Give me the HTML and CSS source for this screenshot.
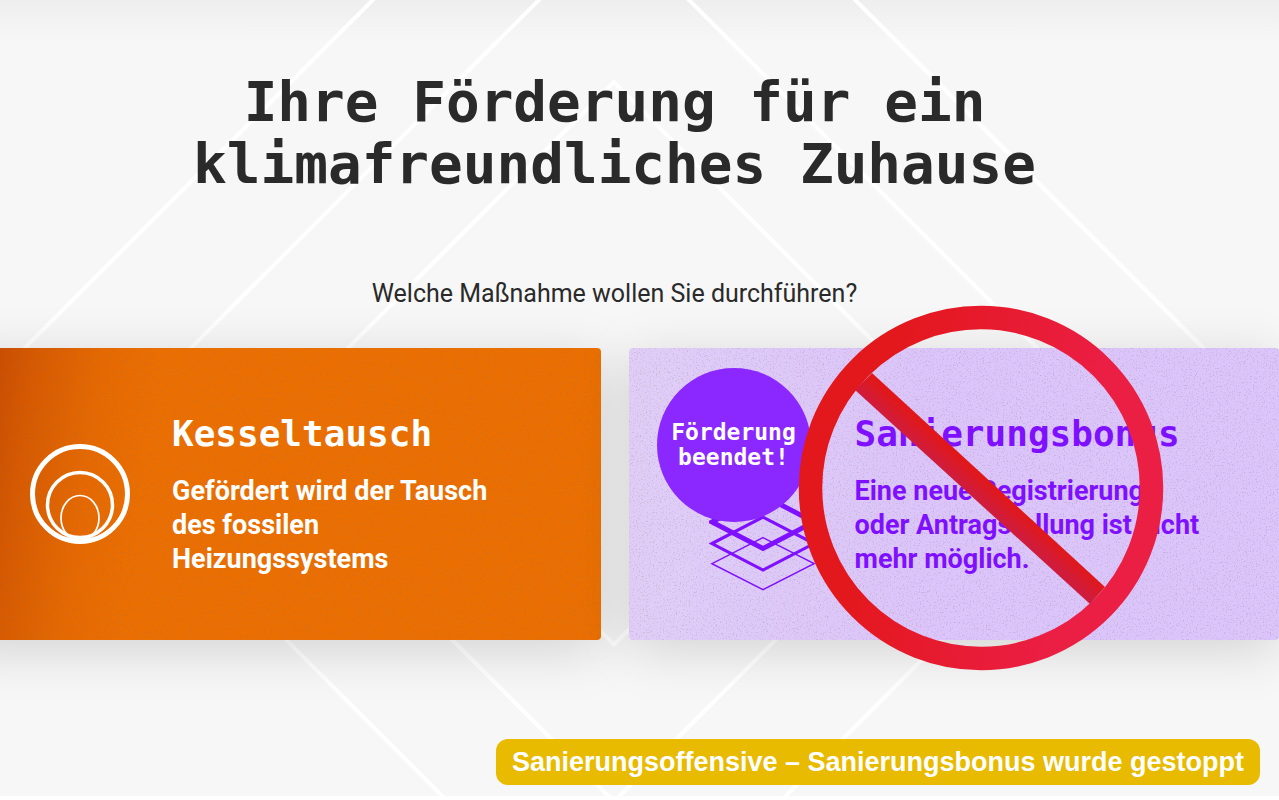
FILE: index.html
```html
<!DOCTYPE html>
<html lang="de">
<head>
<meta charset="utf-8">
<meta name="viewport" content="width=device-width, initial-scale=1">
<title>Ihre Förderung für ein klimafreundliches Zuhause</title>
<link rel="stylesheet" href="styles.css">
</head>
<body>
<main class="hero">
  <svg class="hero-lines" viewBox="0 0 1328 796" preserveAspectRatio="xMidYMin slice" aria-hidden="true">
    <path d="M663.500 82l281 281-281 281-281-281z"/>
    <path d="M663.500 -75l438 438-438 438-438-438z"/>
    <path d="M663.500 -241l604 604-604 604-604-604z"/>
  </svg>

  <h1 class="title">Ihre Förderung für ein<br>klimafreundliches Zuhause</h1>
  <p class="question">Welche Maßnahme wollen Sie durchführen?</p>

  <div class="cards">
    <article class="card card-orange">
      <svg class="grain" aria-hidden="true">
        <filter id="grain"><feTurbulence type="fractalNoise" baseFrequency="0.7" numOctaves="2" seed="4"/><feColorMatrix values="0 0 0 0 0.25  0 0 0 0 0.15  0 0 0 0 0.2  5 0 0 0 -2.800"/></filter>
        <rect width="100%" height="100%" filter="url(#grain)"/>
      </svg>
      <svg class="icon icon-rings" viewBox="0 0 102 102" aria-hidden="true">
        <circle cx="50" cy="51" r="47.500" stroke-width="5"/>
        <circle cx="50" cy="62" r="32.500" stroke-width="3.500"/>
        <ellipse cx="50" cy="75" rx="19" ry="22.500" stroke-width="1.700"/>
      </svg>
      <div class="card-body">
        <h2 class="card-title">Kesseltausch</h2>
        <p class="card-text">Gefördert wird der Tausch<br>des fossilen<br>Heizungssystems</p>
      </div>
    </article>

    <article class="card card-purple">
      <svg class="grain" aria-hidden="true"><rect width="100%" height="100%" filter="url(#grain)"/></svg>
      <svg class="icon icon-stack" viewBox="0 0 108 200" aria-hidden="true">
        <path d="M55 101.500l52 27-52 27-52-27z" stroke-width="5"/>
        <path d="M55 123.500l52 27-52 27-52-27z" stroke-width="3.200"/>
        <path d="M55 144.500l52 26.500-52 26.500-52-26.500z" stroke-width="1.500"/>
      </svg>
      <div class="card-body">
        <h2 class="card-title">Sanierungsbonus</h2>
        <p class="card-text">Eine neue Registrierung<br>oder Antragstellung ist nicht<br>mehr möglich.</p>
      </div>
      <p class="badge">Förderung<br>beendet!</p>
      <svg class="ban" viewBox="0 0 366 366" aria-hidden="true">
        <defs>
          <linearGradient id="ring" x1="0" y1="0.300" x2="1" y2="0.500"><stop offset="0.200" stop-color="#e3181d"/><stop offset="0.800" stop-color="#eb1e44"/></linearGradient>
          <linearGradient id="bar" gradientUnits="userSpaceOnUse" x1="191" y1="174" x2="175" y2="192"><stop offset="0.150" stop-color="#e0181b"/><stop offset="0.900" stop-color="#d01c3c"/></linearGradient>
        </defs>
        <circle cx="183" cy="183" r="170.500" fill="none" stroke="url(#ring)" stroke-width="23.500"/>
        <path d="M74 68L57 85 292 299 307 282z" fill="url(#bar)"/>
      </svg>
    </article>
  </div>

  <p class="caption">Sanierungsoffensive – Sanierungsbonus wurde gestoppt</p>
</main>
</body>
</html>
```
FILE: styles.css
```css
* {
  box-sizing: border-box;
}

body {
  margin: 0;
  background: #fff;
  overflow-x: hidden;
  font-family: Roboto, "Liberation Sans", sans-serif;
}

h1, h2, p {
  margin: 0;
}

/* The section bleeds past the left edge of the window. */
.hero {
  position: relative;
  display: flex;
  flex-direction: column;
  margin-left: -50px;
  padding: 71px 0 11px;
  overflow: hidden;
  background: linear-gradient(#eeeeee, #f7f7f7 42px);
  color: #2a2a2a;
}

.hero-lines {
  position: absolute;
  inset: 0;
  width: 100%;
  height: 100%;
  fill: none;
  stroke: #fff;
  stroke-width: 4;
}

.title {
  position: relative;
  font: 700 56px/62px "DejaVu Sans Mono", monospace;
  text-align: center;
}

.question {
  position: relative;
  margin-top: 84px;
  font-size: 25px;
  line-height: 30px;
  text-align: center;
}

.cards {
  position: relative;
  display: grid;
  grid-template-columns: 1fr 1fr;
  gap: 28px;
  margin-top: 39px;
}

.card {
  position: relative;
  display: flex;
  align-items: center;
  gap: 40px;
  min-height: 292px;
  padding-left: 80px;
  border-radius: 4px;
  box-shadow: 0 10px 54px rgba(0, 0, 0, 0.15);
}

.card-orange {
  background: linear-gradient(98deg, #c44800 5%, #d65900 12%, #e56900 22%, #eb6f00 32%);
  color: #fff;
}

.card-purple {
  background: linear-gradient(90deg, rgba(221, 200, 247, 0.88), rgba(215, 190, 250, 0.88) 45%);
  color: #7f10ff;
}

.grain {
  position: absolute;
  inset: 0;
  width: 100%;
  height: 100%;
  opacity: 0.22;
}

.icon {
  position: relative;
  flex: none;
  fill: none;
  stroke: currentColor;
}

.icon-rings {
  width: 102px;
  height: 102px;
}

.icon-stack {
  width: 106px;
  height: 200px;
}

.card-body {
  position: relative;
  white-space: nowrap;
}

.card-title {
  font: 700 36px/44px "DejaVu Sans Mono", monospace;
}

.card-text {
  margin-top: 18px;
  font-size: 27px;
  font-weight: 700;
  line-height: 34px;
}

.badge {
  position: absolute;
  top: 20px;
  left: 28px;
  display: flex;
  align-items: center;
  justify-content: center;
  width: 154px;
  height: 154px;
  border-radius: 50%;
  background: #8b28ff;
  color: #fff;
  font: 700 23px/25px "DejaVu Sans Mono", monospace;
  text-align: center;
}

.ban {
  position: absolute;
  top: -43px;
  left: 169px;
  width: 366px;
  height: 366px;
}

.caption {
  position: relative;
  align-self: flex-end;
  margin-top: 99px;
  margin-right: 19px;
  padding: 0 16px;
  border-radius: 12px;
  background: #e8ba00;
  color: #fff;
  font: 700 27px/46px "Liberation Sans", sans-serif;
}
```
